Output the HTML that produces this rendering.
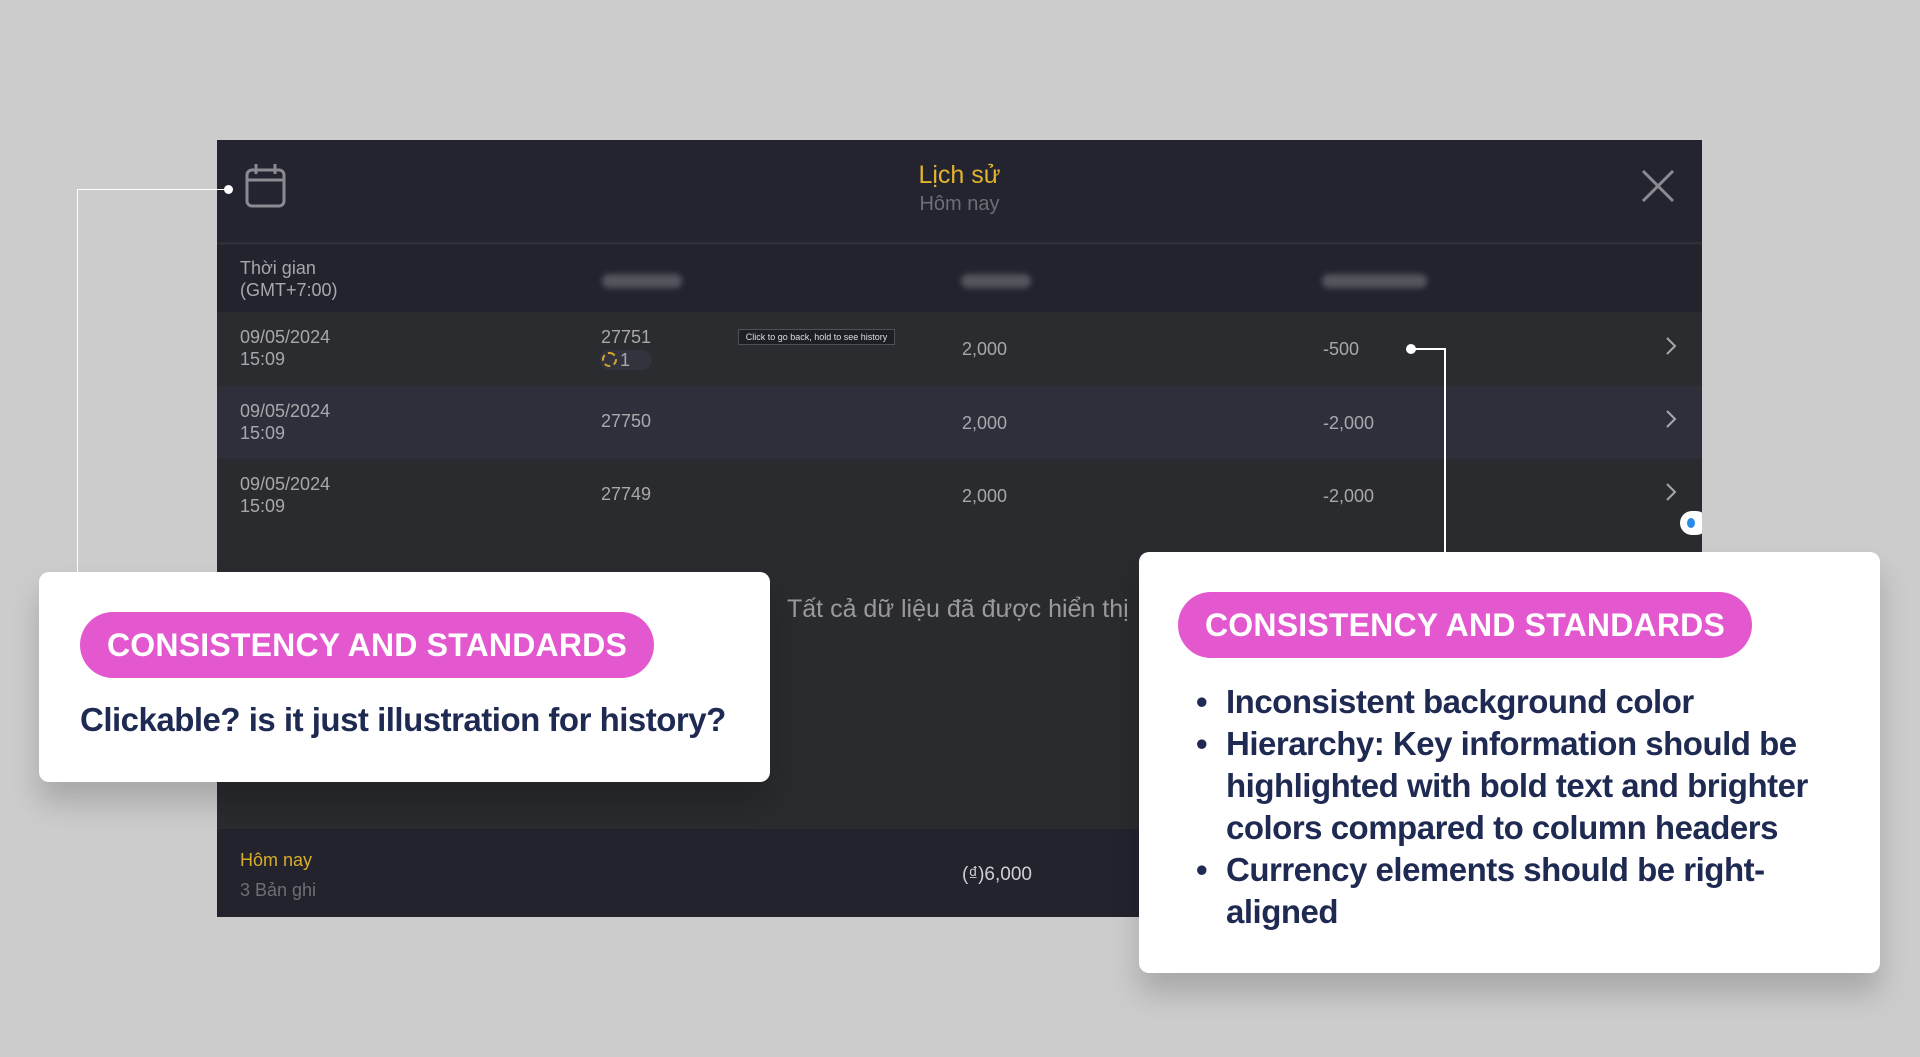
<!DOCTYPE html>
<html><head><meta charset="utf-8"><style>
*{margin:0;padding:0;box-sizing:border-box}
body{width:1920px;height:1057px;background:#cccccc;position:relative;overflow:hidden;font-family:"Liberation Sans",sans-serif}
.a{position:absolute}
.panel{left:217px;top:140px;width:1485px;height:777px;background:#2a2b2f;overflow:hidden}
.t{position:absolute;color:#a8a8ac;font-size:18px;line-height:22px;white-space:nowrap}
.blur{position:absolute;height:14px;background:#55555e;border-radius:7px;filter:blur(3px)}
.card{position:absolute;background:#fff;border-radius:10px;box-shadow:0 20px 30px rgba(0,0,0,.18)}
.pill{position:absolute;background:#e458cf;color:#fff;font-weight:bold;font-size:32px;border-radius:34px;text-align:center;letter-spacing:0.2px}
.body{color:#1f2a52;font-weight:bold;font-size:33px;letter-spacing:-0.5px}
</style></head><body>
<div class="a panel">
  <div class="a" style="left:0;top:0;width:1485px;height:104px;background:#232430;border-bottom:2px solid #2e2f3a"></div>
  <svg class="a" style="left:27px;top:22px" width="44" height="48" viewBox="0 0 44 48"><rect x="3" y="8" width="37" height="36" rx="5" fill="none" stroke="#8a8a90" stroke-width="3"/><line x1="3" y1="18" x2="40" y2="18" stroke="#8a8a90" stroke-width="3"/><line x1="12" y1="2" x2="12" y2="12" stroke="#8a8a90" stroke-width="3"/><line x1="31" y1="2" x2="31" y2="12" stroke="#8a8a90" stroke-width="3"/></svg>
  <div class="a" style="left:0;width:1485px;top:21px;text-align:center;color:#e2b32c;font-size:25px;line-height:28px">Lịch sử</div>
  <div class="a" style="left:0;width:1485px;top:52px;text-align:center;color:#6e6e74;font-size:20px;line-height:24px">Hôm nay</div>
  <svg class="a" style="left:1424px;top:29px" width="34" height="34"><path d="M2 2L32 32M32 2L2 32" stroke="#8a8a90" stroke-width="3"/></svg>
  <div class="a" style="left:0;top:105px;width:1485px;height:67px;background:#23232e"></div>
  <div class="t" style="left:23px;top:117px">Thời gian<br>(GMT+7:00)</div>
  <div class="blur" style="left:385px;top:134px;width:80px"></div>
  <div class="blur" style="left:744px;top:134px;width:70px"></div>
  <div class="blur" style="left:1105px;top:134px;width:105px"></div>
  <div class="a" style="left:0;top:172px;width:1485px;height:74px;background:#2b2c30"></div>
  <div class="a" style="left:0;top:246px;width:1485px;height:73px;background:#2f2f3c"></div>
  <div class="a" style="left:0;top:319px;width:1485px;height:74px;background:#2a2b2f"></div>
  <div class="t" style="left:23px;top:186px">09/05/2024<br>15:09</div>
  <div class="t" style="left:384px;top:186px">27751</div>
  <div class="a" style="left:383px;top:210px;width:52px;height:20px;background:#32333d;border-radius:10px"></div>
  <div class="a" style="left:385px;top:212px;width:15px;height:15px;border:2px dashed #d8a82a;border-radius:50%"></div>
  <div class="t" style="left:403px;top:209px">1</div>
  <div class="a" style="left:521px;top:189px;width:157px;height:16px;border:1px solid #50505a;background:#1e1f24;color:#ddd;font-size:9px;line-height:14px;text-align:center">Click to go back, hold to see history</div>
  <div class="t" style="left:745px;top:198px">2,000</div>
  <div class="t" style="left:1106px;top:198px">-500</div>
  <div class="t" style="left:23px;top:260px">09/05/2024<br>15:09</div>
  <div class="t" style="left:384px;top:270px">27750</div>
  <div class="t" style="left:745px;top:272px">2,000</div>
  <div class="t" style="left:1106px;top:272px">-2,000</div>
  <div class="t" style="left:23px;top:333px">09/05/2024<br>15:09</div>
  <div class="t" style="left:384px;top:343px">27749</div>
  <div class="t" style="left:745px;top:345px">2,000</div>
  <div class="t" style="left:1106px;top:345px">-2,000</div>
  <svg class="a" style="left:1448px;top:196px" width="12" height="20"><path d="M2 2L10 10L2 18" fill="none" stroke="#a8a8ac" stroke-width="2"/></svg>
  <svg class="a" style="left:1448px;top:269px" width="12" height="20"><path d="M2 2L10 10L2 18" fill="none" stroke="#a8a8ac" stroke-width="2"/></svg>
  <svg class="a" style="left:1448px;top:342px" width="12" height="20"><path d="M2 2L10 10L2 18" fill="none" stroke="#a8a8ac" stroke-width="2"/></svg>
  <div class="a" style="left:1463px;top:371px;width:28px;height:24px;background:#fff;border-radius:12px"><div class="a" style="left:7px;top:7px;width:8px;height:10px;background:#2a8ae8;border-radius:50%"></div></div>
  <div class="a" style="left:570px;top:455px;color:#9a9a9e;font-size:25px;white-space:nowrap">Tất cả dữ liệu đã được hiển thị</div>
  <div class="a" style="left:0;top:689px;width:1485px;height:88px;background:#23232e"></div>
  <div class="a" style="left:23px;top:710px;color:#d8ac2a;font-size:18px">Hôm nay</div>
  <div class="a" style="left:23px;top:740px;color:#6e6e74;font-size:18px">3 Bản ghi</div>
  <div class="a" style="left:745px;top:724px;color:#d0d0d4;font-size:19px">(₫)6,000</div>
</div>
<div class="a" style="left:77px;top:190px;width:1px;height:382px;background:#fff"></div>
<div class="a" style="left:77px;top:189px;width:152px;height:1px;background:#fff"></div>
<div class="a" style="left:224px;top:185px;width:9px;height:9px;border-radius:50%;background:#fff"></div>
<div class="a" style="left:1411px;top:348px;width:34px;height:2px;background:#fff"></div>
<div class="a" style="left:1444px;top:348px;width:2px;height:204px;background:#fff"></div>
<div class="a" style="left:1406px;top:344px;width:10px;height:10px;border-radius:50%;background:#fff"></div>
<div class="card" style="left:39px;top:572px;width:731px;height:210px">
  <div class="pill" style="left:41px;top:40px;width:574px;height:66px;line-height:66px">CONSISTENCY AND STANDARDS</div>
  <div class="a body" style="left:41px;top:129px;white-space:nowrap">Clickable? is it just illustration for history?</div>
</div>
<div class="card" style="left:1139px;top:552px;width:741px;height:421px">
  <div class="pill" style="left:39px;top:40px;width:574px;height:66px;line-height:66px">CONSISTENCY AND STANDARDS</div>
  <div class="a body" style="left:87px;top:129px;width:650px;line-height:42px;white-space:nowrap">
    <div style="position:relative">Inconsistent background color<span class="a" style="left:-30px;top:0">•</span></div>
    <div style="position:relative">Hierarchy: Key information should be<br>highlighted with bold text and brighter<br>colors compared to column headers<span class="a" style="left:-30px;top:0">•</span></div>
    <div style="position:relative">Currency elements should be right-<br>aligned<span class="a" style="left:-30px;top:0">•</span></div>
  </div>
</div>
</body></html>
